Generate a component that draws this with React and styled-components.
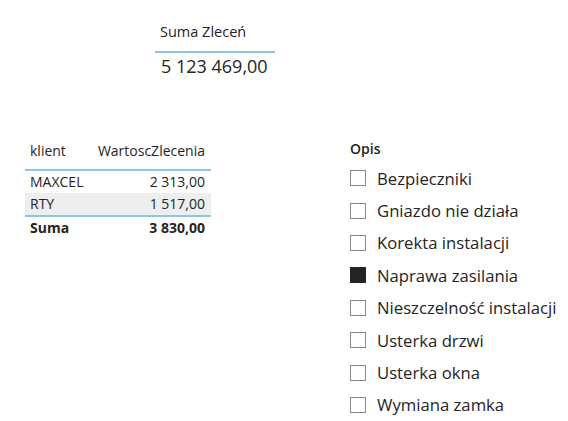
import React from "react";
import styled, { createGlobalStyle } from "styled-components";

const Global = createGlobalStyle`
  html, body { margin: 0; padding: 0; background: #fff; }
  body { font-family: "Open Sans", "Noto Sans", sans-serif; color: #252423; }
`;

const Page = styled.div`
  position: relative;
  width: 568px;
  height: 421px;
  display: grid;
  grid-template-columns: 325px 1fr;
  grid-template-rows: 130px 1fr;
`;

const Card = styled.div`
  grid-column: 1 / 3;
  padding: 21px 0 0 155px;
  display: flex;
  flex-direction: column;
  align-items: flex-start;
`;

const CardTitle = styled.div`
  width: 120px;
  box-sizing: border-box;
  padding: 0 0 8px 5px;
  font-size: 14.5px;
  line-height: 22px;
  border-bottom: 2px solid #8ec6ea;
`;

const CardValue = styled.div`
  padding: 1px 0 0 6px;
  font-size: 18px;
  line-height: 24px;
`;

const TableWrap = styled.div`
  padding: 10px 0 0 25px;
`;

const Table = styled.table`
  border-collapse: collapse;
  width: 186px;
  font-size: 14px;
`;

const Th = styled.th`
  font-weight: 400;
  text-align: ${(p) => (p.$right ? "right" : "left")};
  padding: 2px 6px 9px 5px;
  line-height: 18px;
  border-bottom: 2px solid #8ec6ea;
`;

const Tr = styled.tr`
  background: ${(p) => (p.$shaded ? "#eeeeee" : "transparent")};
  border-bottom: ${(p) => (p.$last ? "2px solid #8ec6ea" : "none")};
`;

const Td = styled.td`
  text-align: ${(p) => (p.$right ? "right" : "left")};
  padding: 2px 6px 2px 5px;
  line-height: 18px;
  font-weight: ${(p) => (p.$bold ? 700 : 400)};
`;

const Slicer = styled.div`
  padding: 10px 0 0 25px;
  display: flex;
  flex-direction: column;
`;

const SlicerTitle = styled.div`
  font-size: 14px;
  font-weight: 600;
  line-height: 18px;
  margin-bottom: 4px;
`;

const Item = styled.div`
  display: flex;
  align-items: center;
  gap: 11px;
  height: 32.4px;
  font-size: 16.7px;
`;

const Box = styled.span`
  width: 16px;
  height: 16px;
  box-sizing: border-box;
  border: 1px solid ${(p) => (p.$on ? "#252423" : "#8a8886")};
  background: ${(p) => (p.$on ? "#252423" : "#fff")};
  flex: none;
`;

const items = [
  ["Bezpieczniki", false],
  ["Gniazdo nie działa", false],
  ["Korekta instalacji", false],
  ["Naprawa zasilania", true],
  ["Nieszczelność instalacji", false],
  ["Usterka drzwi", false],
  ["Usterka okna", false],
  ["Wymiana zamka", false],
];

export default function App() {
  return (
    <Page>
      <Global />
      <Card>
        <CardTitle>Suma Zleceń</CardTitle>
        <CardValue>5 123 469,00</CardValue>
      </Card>
      <TableWrap>
        <Table>
          <thead>
            <tr>
              <Th>klient</Th>
              <Th $right>WartoscZlecenia</Th>
            </tr>
          </thead>
          <tbody>
            <Tr>
              <Td>MAXCEL</Td>
              <Td $right>2 313,00</Td>
            </Tr>
            <Tr $shaded $last>
              <Td>RTY</Td>
              <Td $right>1 517,00</Td>
            </Tr>
            <Tr>
              <Td $bold>Suma</Td>
              <Td $right $bold>3 830,00</Td>
            </Tr>
          </tbody>
        </Table>
      </TableWrap>
      <Slicer>
        <SlicerTitle>Opis</SlicerTitle>
        {items.map(([label, on]) => (
          <Item key={label}>
            <Box $on={on} />
            {label}
          </Item>
        ))}
      </Slicer>
    </Page>
  );
}
